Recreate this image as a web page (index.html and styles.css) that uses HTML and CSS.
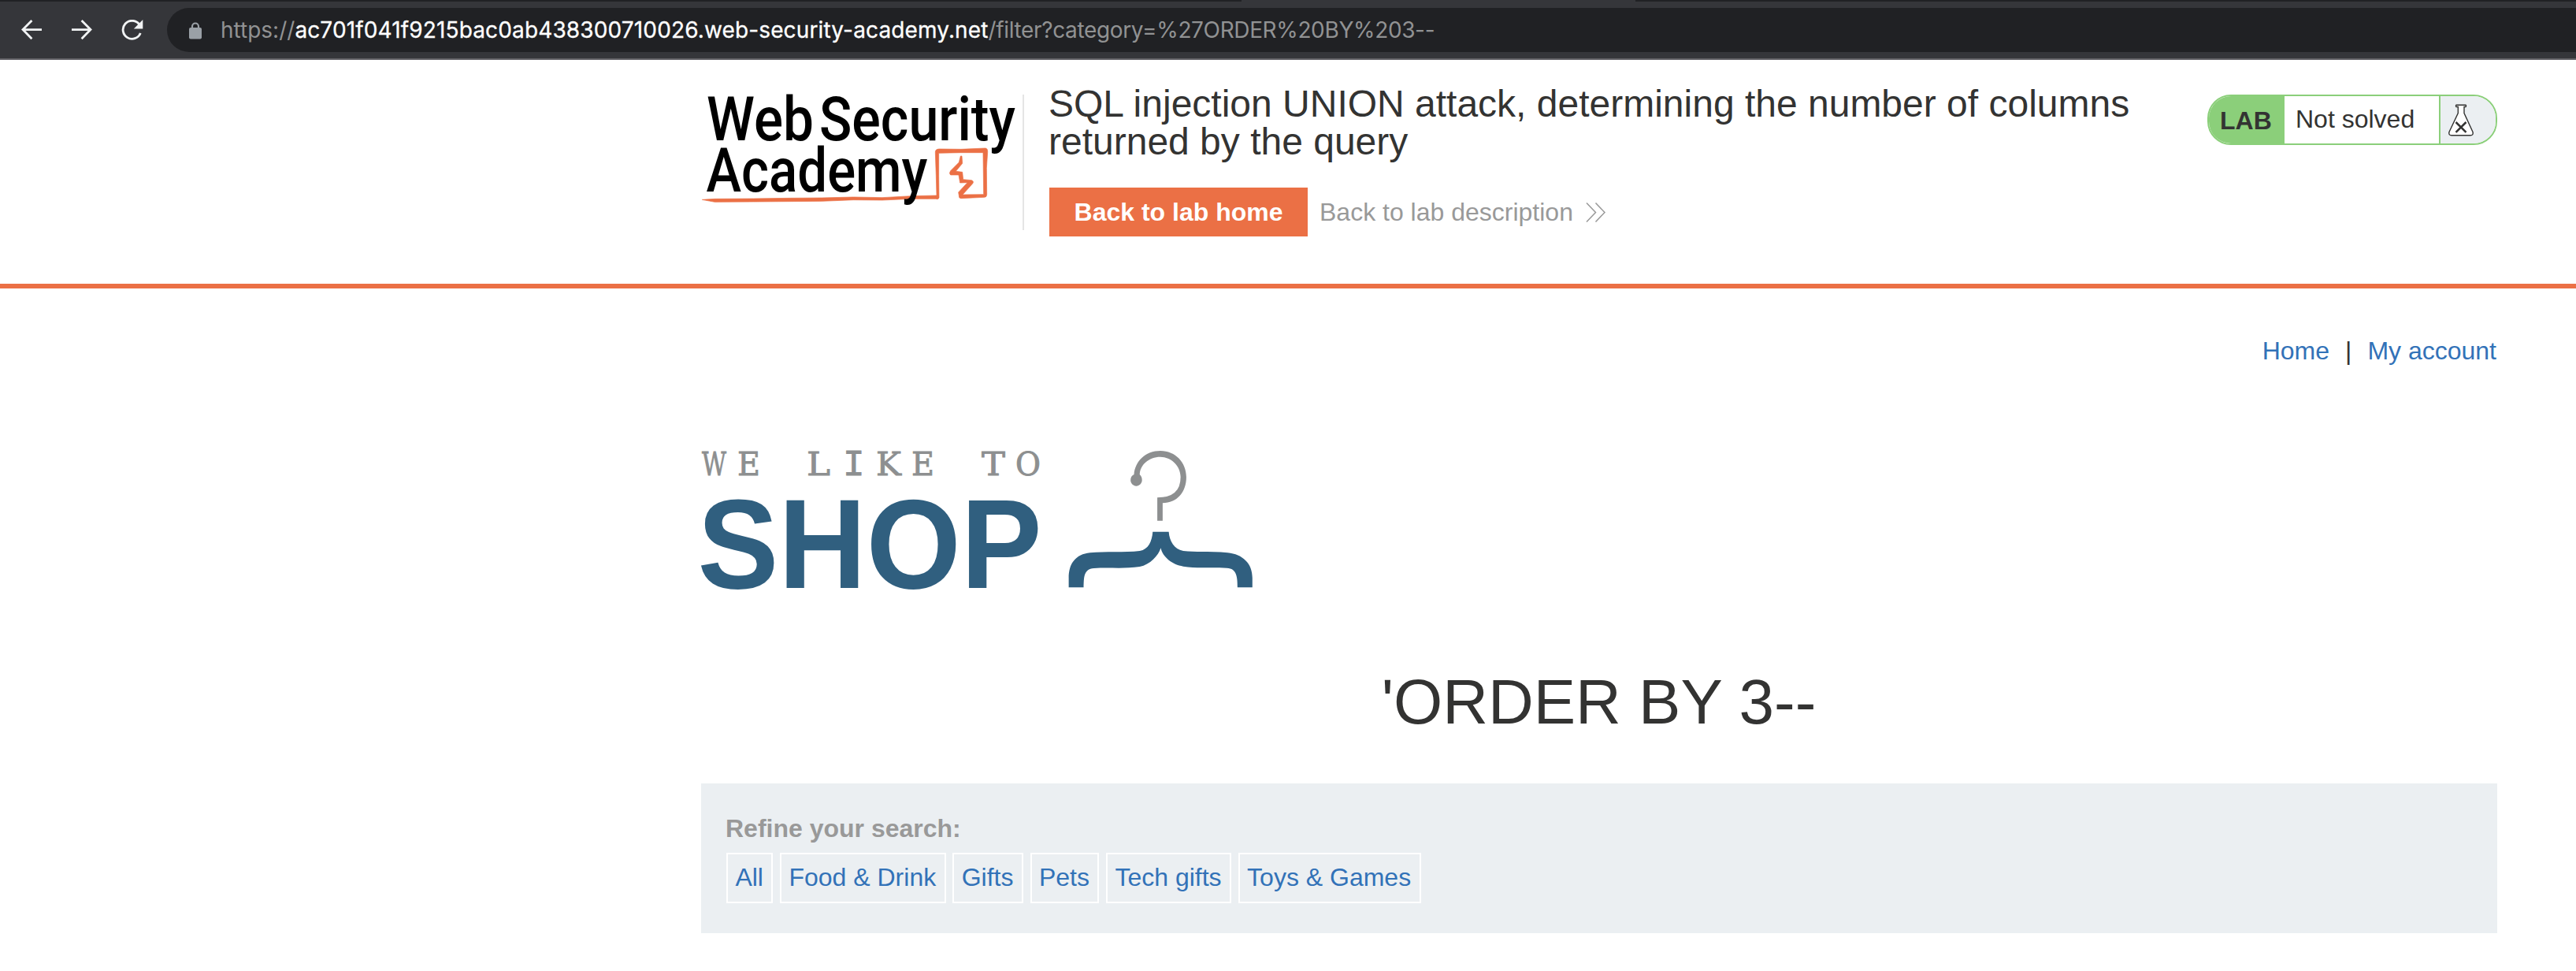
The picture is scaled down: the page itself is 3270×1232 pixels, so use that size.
FILE: index.html
```html
<!DOCTYPE html>
<html lang="en">
<head>
<meta charset="utf-8">
<title>SQL injection UNION attack</title>
<link rel="stylesheet" href="styles.css">
</head>
<body>
<div class="tabs"><div class="tab"></div></div>
<div class="toolbar">
  <svg class="nav back" width="26" height="26" viewBox="0 0 26 26"><path d="M26 12.6H2.5M13.4 1 2 12.6 13.4 24.200"/></svg>
  <svg class="nav forward" width="26" height="26" viewBox="0 0 26 26"><path d="M0 12.6h23.500M12.600 1 24 12.600 12.600 24.200"/></svg>
  <svg class="nav reload" width="28" height="27" viewBox="0 0 28 27"><path d="M22.500 5.500A11.500 11.500 0 1 0 24.300 17"/><path class="tip" d="M27.300 0v11.500H15.800z"/></svg>
  <div class="address">
    <svg class="lock" width="16" height="22" viewBox="0 0 16 22"><path class="shackle" d="M4 9V5.500a4 4 0 0 1 8 0V9"/><rect y="7" width="16" height="14.500" rx="2"/></svg>
    <div class="url"><span class="scheme">https://</span><span class="host">ac701f041f9215bac0ab438300710026.web-security-academy.net</span><span class="path">/filter?category=%27ORDER%20BY%203--</span></div>
  </div>
</div>
<header class="lab-header">
  <div class="container lab-row">
    <svg class="academy-logo" width="404" height="140" viewBox="890 120 404 140">
      <g transform="translate(870 90) scale(.33333)" class="sketch">
        <path d="M64 490L112 487 260 486 400 484 520 483 640 480 750 482 860 476 957 474 955 400 952 310Q951 298 966 297L1050 298 1142 294Q1152 294 1151 310L1147 370 1148 470Q1148 481 1138 481L1050 485Q1041 485 1042 474L1040 462 1074 425 1046 426 1041 396 1010 396Q1003 390 1010 380L1042 348 1048 324 1053 324 1055 352 1030 382 1055 385 1058 413 1090 416Q1101 420 1093 430L1056 471 1136 470 1134 311 1050 311 965 313 965 400 966 483Q964 491 953 487L860 487 750 492 640 491 520 496 260 498 112 499Z"/>
      </g>
      <text x="897" y="178" textLength="136" lengthAdjust="spacingAndGlyphs">Web</text>
      <text x="1040" y="178" textLength="249" lengthAdjust="spacingAndGlyphs">Security</text>
      <text x="896.500" y="242.500" textLength="281" lengthAdjust="spacingAndGlyphs">Academy</text>
    </svg>
    <div class="lab-info">
      <h2>SQL injection UNION attack, determining the number of columns returned by the query</h2>
      <div class="lab-links">
        <a class="button">Back to lab home</a>
        <a class="description">Back to lab description</a>
        <svg class="chevrons" width="26" height="25" viewBox="0 0 26 25"><path d="M1 .5 12.500 12.500 1 24.500M12.500 .5 24 12.500 12.500 24.500"/></svg>
      </div>
    </div>
    <div class="status">
      <span class="badge">LAB</span>
      <span class="state">Not solved</span>
      <span class="flask"><svg width="32" height="41" viewBox="0 0 32 41"><path class="glass" d="M10 1.200h12q1 1.200 0 2.300h-2v8L31 35.500q1 4-3 4.300H4q-4-.3-3-4.300L12.300 11.500v-8H10q-1-1.100 0-2.300z"/><path class="cross" d="M9.500 23 22.500 35.800M22.500 23 9.500 35.800"/></svg></span>
    </div>
  </div>
</header>
<main class="container">
  <nav class="top-links"><a>Home</a><span>|</span><a>My account</a></nav>
  <svg class="shop-logo" width="710" height="190" viewBox="885 565 710 190">
    <text class="tagline" y="602.500"><tspan x="891" textLength="31" lengthAdjust="spacingAndGlyphs">W</tspan><tspan x="936" textLength="29" lengthAdjust="spacingAndGlyphs">E</tspan> <tspan x="1024" textLength="30" lengthAdjust="spacingAndGlyphs">L</tspan><tspan class="mono" x="1070">I</tspan><tspan x="1112" textLength="32" lengthAdjust="spacingAndGlyphs">K</tspan><tspan x="1157" textLength="29" lengthAdjust="spacingAndGlyphs">E</tspan> <tspan x="1246" textLength="30" lengthAdjust="spacingAndGlyphs">T</tspan><tspan x="1289" textLength="32" lengthAdjust="spacingAndGlyphs">O</tspan></text>
    <text class="shop" x="885.500" y="746" textLength="437" lengthAdjust="spacingAndGlyphs">SHOP</text>
    <g transform="translate(870 540) scale(.4847 .33333)">
      <path class="hook" d="M1236 362V274Q1297 274 1297 196C1297 153 1272 119 1244 119C1214 119 1190 150 1190 187Q1196 194 1196 208C1196 220 1189 230 1181 230S1166 220 1166 208Q1166 192 1175 186C1178 135 1205 96 1244 96C1284 96 1312 141 1312 196C1312 254 1287 295 1250 295V362Z"/>
      <path class="hanger" d="M1224 404H1266C1268 440 1280 470 1304 477C1340 483 1380 477 1420 484C1460 490 1485 525 1485 580V616H1446C1446 580 1445 543 1418 542C1380 538 1340 544 1304 536C1275 530 1250 500 1245 466C1239 495 1217 530 1190 537C1150 546 1110 539 1070 543C1042 546 1044 580 1043 616H1004V580C1004 525 1022 490 1060 484C1100 478 1150 484 1190 477C1213 471 1222 440 1224 404Z"/>
    </g>
  </svg>
  <h1>'ORDER BY 3--</h1>
  <section class="filters">
    <label>Refine your search:</label>
    <div class="chips"><a>All</a><a>Food &amp; Drink</a><a>Gifts</a><a>Pets</a><a>Tech gifts</a><a>Toys &amp; Games</a></div>
  </section>
</main>
</body>
</html>
```
FILE: styles.css
```css
* { box-sizing: border-box; }
body {
  margin: 0;
  background: #fff;
  color: #333332;
  font: 32px/36px "Liberation Sans", Arial, sans-serif;
}
.tabs { height: 2px; background: #202124; padding-left: 1576px; }
.tab { width: 500px; height: 2px; background: #35363a; }
.toolbar {
  display: flex;
  align-items: flex-start;
  height: 74px;
  padding: 8px 0 0 27px;
  background: #35363a;
  border-bottom: 2px solid #626166;
}
.nav { flex: none; margin-top: 15px; fill: none; stroke: #f1f3f4; stroke-width: 2.800; }
.back { margin-right: 38px; }
.forward { margin-right: 37px; }
.reload { margin-right: 30px; }
.reload .tip { fill: #f1f3f4; stroke: none; }
.address {
  display: flex;
  flex: 1;
  height: 56px;
  padding-left: 28px;
  border-radius: 28px 0 0 28px;
  background: #202124;
}
.lock { margin: 18px 24px 0 0; fill: #9aa0a6; }
.shackle { fill: none; stroke: #9aa0a6; stroke-width: 2.200; }
.url { font: 28px/56px Inter, sans-serif; white-space: nowrap; color: #919293; }
.host { color: #fff; letter-spacing: .14px; -webkit-text-stroke: .3px #fff; }
.path { letter-spacing: -.36px; }
.container { width: 2280px; margin-left: 890px; }
.lab-header { height: 290px; border-bottom: 6px solid #eb7045; }
.lab-row { display: flex; align-items: flex-start; padding-top: 30px; }
.academy-logo { flex: none; margin-top: 14px; font: 500 77px Roboto, sans-serif; overflow: visible; }
.academy-logo text { fill: #000; }
.sketch { fill: #eb7045; stroke: #eb7045; stroke-width: 2; }
.lab-info { width: 1470px; height: 172px; margin: 14px 0 0 4px; padding-left: 31px; border-left: 2px solid #e5e5e5; }
h2 { margin: -12px 0 0; font-size: 48px; line-height: 48px; font-weight: 400; }
.lab-links { display: flex; align-items: center; margin: 34px 0 0 1px; height: 62px; }
.button { width: 328px; line-height: 62px; text-align: center; font-weight: 700; color: #fff; background: #eb7045; }
.description { margin: 0 16px 0 15px; color: #999; }
.chevrons { fill: none; stroke: #999; stroke-width: 1.500; }
.status {
  display: flex;
  width: 368px;
  height: 64px;
  margin: 14px 0 0 auto;
  overflow: hidden;
  border: 2px solid #8bcf7a;
  border-radius: 30px;
  line-height: 60px;
}
.badge { width: 96px; padding: 1px 0 0 14px; font-weight: 700; background: #8bcf7a; }
.state { flex: 1; padding-left: 14px; margin-top: -1px; }
.flask { width: 72px; padding: 10px 0 0 10px; line-height: 0; background: #ebeff2; border-left: 2px solid #8bcf7a; }
.glass { fill: #fff; stroke: #333332; stroke-width: 1.400; }
.cross { stroke: #333332; stroke-width: 2.500; }
.top-links { display: flex; justify-content: flex-end; padding: 61px 1px 0 0; gap: 20px; }
a { color: #3272b8; }
.shop-logo { display: block; margin: 102px 0 0 -5px; overflow: visible; }
.tagline { font: 41px "DejaVu Serif", serif; fill: #8d8f90; stroke: #8d8f90; stroke-width: .9; }
.mono { font: 46px "Liberation Mono", monospace; }
.shop { font: 700 162px "Liberation Sans", sans-serif; fill: #305f7f; }
.hook { fill: #8d8f90; }
.hanger { fill: #305f7f; }
h1 { margin: 92px 1px 0 0; font-size: 80px; line-height: 88px; font-weight: 400; text-align: center; }
.filters { height: 190px; margin-top: 59px; padding: 39px 32px 0; background: #ebeff2; }
.filters label { display: block; margin-left: -1px; font-weight: 700; color: #999; }
.chips { display: flex; gap: 8.600px; margin-top: 13px; }
.chips a { height: 64px; padding: 0 10.500px 0 9.400px; line-height: 59px; border: 2px solid #fff; }
```
